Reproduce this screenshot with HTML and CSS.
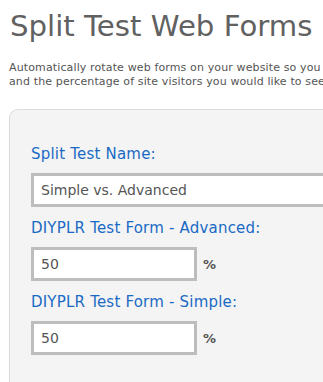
FILE: index.html
```html
<!DOCTYPE html>
<html lang="en">
<head>
    <meta charset="UTF-8">
    <meta name="viewport" content="width=device-width, initial-scale=1.0">
    <title>Split Test Web Forms</title>
    <link rel="stylesheet" href="styles.css">
</head>
<body>
    <div class="page">
        <h1 class="page-title">Split Test Web Forms</h1>
        <p class="intro">Automatically rotate web forms on your website so you can see which one converts better. Choose the forms to test<br>and the percentage of site visitors you would like to see each form.</p>

        <form class="split-panel">
            <div class="form-group">
                <label for="testName">Split Test Name:</label>
                <input type="text" id="testName" class="form-control wide" value="Simple vs. Advanced">
            </div>

            <div class="form-group">
                <label for="formAdvanced">DIYPLR Test Form - Advanced:</label>
                <div class="percent-row">
                    <input type="text" id="formAdvanced" class="form-control short" value="50">
                    <span class="unit">%</span>
                </div>
            </div>

            <div class="form-group">
                <label for="formSimple">DIYPLR Test Form - Simple:</label>
                <div class="percent-row">
                    <input type="text" id="formSimple" class="form-control short" value="50">
                    <span class="unit">%</span>
                </div>
            </div>
        </form>
    </div>
</body>
</html>
```

FILE: styles.css
```css
:root {
    --title: #616161;
    --text: #555;
    --label: #1a6ac4;
    --panel: #f4f4f4;
    --panel-border: #dcdcdc;
    --input-border: #bdbdbd;
}

body {
    font-family: 'DejaVu Sans', Verdana, sans-serif;
    margin: 0;
    padding: 0;
    background: white;
    color: var(--text);
    overflow: hidden;
}

.page {
    width: 900px;
    padding: 0 0 0 9px;
}

.page-title {
    margin: 0;
    padding: 8px 0 0 1px;
    font-size: 29.2px;
    font-weight: normal;
    line-height: 36px;
    color: var(--title);
}

.intro {
    margin: 17px 0 0;
    font-size: 11px;
    letter-spacing: 0.13px;
    line-height: 14px;
    color: var(--text);
    white-space: nowrap;
}

.split-panel {
    margin-top: 20px;
    background: var(--panel);
    border: 1px solid var(--panel-border);
    border-radius: 9px;
    padding: 35px 0 30px 21px;
}

.form-group {
    margin-bottom: 12px;
}

.form-group label {
    display: block;
    font-size: 15px;
    letter-spacing: 0.2px;
    line-height: 19px;
    color: var(--label);
    margin-bottom: 9px;
}

.form-control {
    box-sizing: border-box;
    height: 34px;
    border: 3px solid var(--input-border);
    background: white;
    font-family: 'DejaVu Sans', Verdana, sans-serif;
    font-size: 14px;
    color: var(--text);
    padding: 0 7px;
    outline: none;
}

.wide {
    width: 420px;
}

.short {
    width: 166px;
}

.percent-row {
    display: flex;
    align-items: center;
    gap: 6px;
}

.unit {
    font-size: 13px;
    font-weight: bold;
    color: #555;
}
```
